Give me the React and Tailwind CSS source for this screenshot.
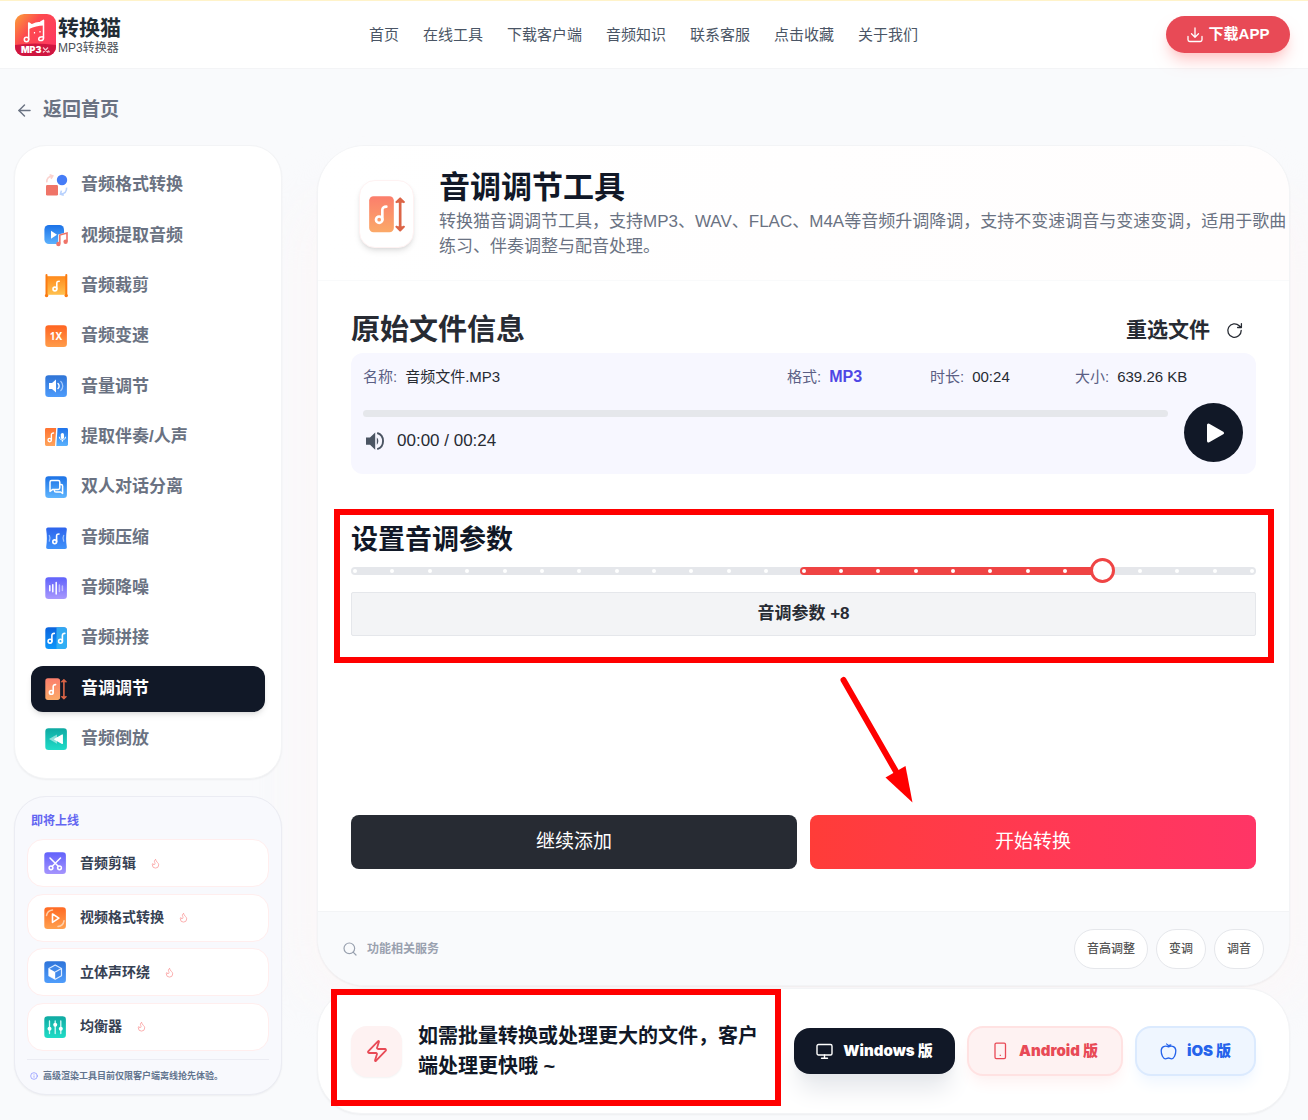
import { useState } from "react";
import { ArrowLeft, Search, Zap, Flame, Info } from "lucide-react";

const navLinks = ["首页", "在线工具", "下载客户端", "音频知识", "联系客服", "点击收藏", "关于我们"];

const Note = ({ x = 0, y = 0, width = 1.6 }) => (
  <g transform={`translate(${x} ${y})`} fill="none" stroke="#fff" strokeWidth={width} strokeLinecap="round">
    <circle cx="10.5" cy="15" r="1.9" />
    <path d="M12.4 15V9.2c0-1.4.9-2 2.4-2" />
  </g>
);

const Icon = ({ children, size = 24 }) => (
  <svg width={size} height={size} viewBox="0 0 24 24" className="shrink-0" aria-hidden="true">{children}</svg>
);

const Tile = ({ id, from, to, children }) => (
  <Icon>
    <defs>
      <linearGradient id={id} x1="0" y1="0" x2="0" y2="1">
        <stop stopColor={from} />
        <stop offset="1" stopColor={to} />
      </linearGradient>
    </defs>
    <rect x="1.3" y="1.3" width="21.6" height="21.6" rx="3.2" fill={`url(#${id})`} />
    {children}
  </Icon>
);

const FormatIcon = () => (
  <Icon>
    <rect x="2" y="12" width="12" height="10.5" rx="1.2" fill="#ef7468" />
    <circle cx="18" cy="7" r="5.2" fill="#457cf7" />
    <path d="M2.8 9.4C2.6 5 4.5 3.4 8 3.2M5.6 1.8L8.8 3 7 5.8" fill="none" stroke="#fbd3cf" strokeWidth="1.6" />
    <path d="M22.6 14.6c.2 4-2 6-5.600 6.400M17.400 17.600l-1 3.600 3.400 1" fill="none" stroke="#b9d2fd" strokeWidth="1.6" />
  </Icon>
);

const ExtractIcon = () => (
  <Icon>
    <defs>
      <linearGradient id="extract" x1="0" y1="0" x2="0" y2="1">
        <stop stopColor="#1b72e8" />
        <stop offset="1" stopColor="#5cb1fd" />
      </linearGradient>
    </defs>
    <rect x="0.4" y="2" width="19.6" height="19" rx="4.5" fill="url(#extract)" />
    <path d="M7 7.7v8l6-4z" fill="#fff" />
    <path d="M14.2 20.6v-9l9.800-2.600v10.600l-6 3z" fill="#fff" />
    <path d="M15.8 20.6v-8.600l7.200-2v8.600" fill="none" stroke="#ef7468" strokeWidth="1.6" />
    <circle cx="14.4" cy="21" r="2.2" fill="#ef7468" />
    <circle cx="21.6" cy="18.8" r="2.2" fill="#ef7468" />
  </Icon>
);

const CutIcon = () => (
  <Icon>
    <defs>
      <linearGradient id="cut" x1="0" y1="0" x2="0" y2="1">
        <stop stopColor="#ff8a1c" />
        <stop offset="1" stopColor="#ffc14f" />
      </linearGradient>
    </defs>
    <rect x="2" y="2.2" width="20.6" height="18.6" fill="url(#cut)" />
    <path d="M2.5 1v21M22.3 1v21" stroke="#fb7c12" strokeWidth="2" strokeLinecap="round" />
    <circle cx="2.6" cy="21.6" r="1.7" fill="#fb7c12" />
    <circle cx="22.2" cy="21.6" r="1.7" fill="#fb7c12" />
    <Note x={0.4} />
  </Icon>
);

const SpeedIcon = () => (
  <Tile id="speed" from="#ff6421" to="#ff9c4a">
    <text x="12" y="15.6" textAnchor="middle" fontSize="10" fontWeight="700" fill="#fff" fontFamily="Noto Sans, sans-serif">1X</text>
  </Tile>
);

const VolumeIcon = () => (
  <Tile id="volume" from="#2f74d6" to="#4d9bfb">
    <path d="M5 9h3l4-3.6v13.2L8 15H5z" fill="#fff" />
    <path d="M14 9.4c1.5 1.4 1.5 3.8 0 5.2" fill="none" stroke="#fff" strokeWidth="1.4" strokeLinecap="round" />
    <path d="M16.8 7.4c2.6 2.6 2.6 6.6 0 9.2" fill="none" stroke="#a8cbfb" strokeWidth="1.3" strokeLinecap="round" />
  </Tile>
);

const VocalIcon = () => (
  <Icon>
    <defs>
      <linearGradient id="vocalA" x1="0" y1="0" x2="0" y2="1">
        <stop stopColor="#ff7230" />
        <stop offset="1" stopColor="#ffa45c" />
      </linearGradient>
      <linearGradient id="vocalB" x1="0" y1="0" x2="0" y2="1">
        <stop stopColor="#1f73ea" />
        <stop offset="1" stopColor="#5ab2fd" />
      </linearGradient>
    </defs>
    <path d="M2.4 3h9.8l-1.2 18H2.4A1.4 1.4 0 0 1 1 19.6V4.4A1.4 1.4 0 0 1 2.4 3z" fill="url(#vocalA)" />
    <path d="M13.6 3h9A1.4 1.4 0 0 1 24 4.4v15.2A1.4 1.4 0 0 1 22.6 21H12.3z" fill="url(#vocalB)" />
    <g transform="translate(-1.5 1.2) scale(.9)"><Note x={-2.5} y={0.4} width={1.5} /></g>
    <rect x="16.8" y="8" width="3.2" height="6" rx="1.6" fill="#fff" />
    <path d="M15.3 11.8c0 4.2 6.2 4.2 6.2 0M18.4 15v1.8" fill="none" stroke="#fff" strokeWidth="1" />
  </Icon>
);

const DialogIcon = () => (
  <Tile id="dialog" from="#1c72e6" to="#5fb5fe">
    <path d="M6 7.2c0-1 .6-1.6 1.6-1.6h6.6c1 0 1.6.6 1.6 1.6v5.6c0 1-.6 1.600-1.600 1.600H8.800L6 16.400z" fill="none" stroke="#fff" strokeWidth="1.5" strokeLinejoin="round" />
    <path d="M15.8 9.400h1.200c1 0 1.600.6 1.600 1.600v7.400l-2-1.400H12c-1 0-1.600-.6-1.600-1.600v-1" fill="none" stroke="#fff" strokeWidth="1.5" strokeLinejoin="round" />
  </Tile>
);

const CompressIcon = () => (
  <Icon>
    <defs>
      <linearGradient id="compress" x1="0" y1="0" x2="0" y2="1">
        <stop stopColor="#2d63ec" />
        <stop offset="1" stopColor="#3f92fa" />
      </linearGradient>
    </defs>
    <path d="M4 1.500h17c1.400 0 2 1 1.800 2.200-.9 5.600-.9 11.200 0 17 .2 1.300-.5 2.300-1.800 2.300H4c-1.300 0-2-1-1.800-2.300.9-5.800.9-11.400 0-17C2 2.500 2.700 1.500 4 1.500z" fill="url(#compress)" />
    <path d="M5.300 9.500c1 1.900 1 3.700 0 5.600M19.700 9.500c-1 1.900-1 3.700 0 5.600" fill="none" stroke="#9cc0fc" strokeWidth="1.3" strokeLinecap="round" />
    <Note x={0.2} y={0.8} />
  </Icon>
);

const DenoiseIcon = () => (
  <Tile id="denoise" from="#6062fb" to="#a898fd">
    <g stroke="#fff" strokeWidth="1.5" strokeLinecap="round">
      <path d="M5.8 9.8v5M8.8 8.8v7M12.2 6.4v11.600" />
      <path d="M15.4 9v6.600M18.400 10v4.600" opacity=".5" />
    </g>
  </Tile>
);

const SpliceIcon = () => (
  <Tile id="splice" from="#0b63dd" to="#0d97fb">
    <path d="M12.5 1.3h7.200a3.200 3.200 0 0 1 3.200 3.200v15.200a3.200 3.200 0 0 1-3.200 3.200h-7.200z" fill="#38b4f5" opacity=".85" />
    <Note x={-4.5} y={0.2} />
    <Note x={6} y={0.2} />
  </Tile>
);

const PitchIcon = ({ size }) => (
  <Icon size={size}>
    <defs>
      <linearGradient id="pitch" x1="0" y1="0" x2="0" y2="1">
        <stop stopColor="#fb7e6c" />
        <stop offset="1" stopColor="#fba968" />
      </linearGradient>
    </defs>
    <rect x="1.3" y="1.3" width="14.8" height="21.6" rx="2.6" fill="url(#pitch)" />
    <Note x={-3.2} y={0.4} />
    <path d="M19.9 3.5v17" stroke="#dc6547" strokeWidth="1.6" />
    <path d="M17.3 5.2l2.6-2.6 2.6 2.6M17.3 19.3l2.6 2.6 2.6-2.6" fill="#dc6547" stroke="#dc6547" strokeWidth="1.2" strokeLinejoin="round" />
  </Icon>
);

const ReverseIcon = () => (
  <Tile id="reverse" from="#0fa9a2" to="#20dcc8">
    <path d="M13 7.4v9.4L5 12.1z" fill="#fff" opacity=".5" strokeLinejoin="round" />
    <path d="M18.3 8v8.4l-7.6-4.2z" fill="#fff" stroke="#fff" strokeWidth="1.2" strokeLinejoin="round" />
  </Tile>
);

const ScissorsIcon = () => (
  <Tile id="scissors" from="#6161fb" to="#a594fd">
    <g fill="none" stroke="#fff" strokeWidth="1.5" strokeLinecap="round">
      <path d="M7 7l8.5 8.5M17.5 7L9 15.5" />
      <circle cx="8" cy="16.8" r="1.9" />
      <circle cx="16.5" cy="16.8" r="1.9" />
    </g>
  </Tile>
);

const VideoIcon = () => (
  <Tile id="video" from="#ff6a24" to="#ffa04e">
    <path d="M9.5 8v8.4l6.4-4.2z" fill="none" stroke="#fff" strokeWidth="1.6" strokeLinejoin="round" />
    <path d="M3.5 9.5c.6-3.200 2.600-5 6-5.400M21 14.800c-.6 3.400-2.600 5.300-6 5.700" fill="none" stroke="#ffd0aa" strokeWidth="1.5" strokeLinecap="round" />
  </Tile>
);

const CubeIcon = () => (
  <Tile id="cube" from="#2e74da" to="#4f9dfb">
    <path d="M12.2 5l6.3 3.5v7.2l-6.3 3.6-6.3-3.6V8.500z" fill="#4189ea" stroke="#dcebff" strokeWidth="1.2" strokeLinejoin="round" />
    <path d="M5.9 8.5l6.3 3.5v7.300l-6.300-3.600z" fill="#fff" />
    <path d="M12.2 12l6.3-3.5" stroke="#dcebff" strokeWidth="1.2" />
  </Tile>
);

const EqualizerIcon = () => (
  <Tile id="equalizer" from="#0fa9a2" to="#1fdcc6">
    <path d="M6.5 6v12.5M12.2 6v12.5M17.8 6v12.5" stroke="#d6fbf6" strokeWidth="1.3" strokeLinecap="round" />
    <circle cx="6.5" cy="13.8" r="2" fill="#fff" />
    <circle cx="12.2" cy="9.8" r="2" fill="#fff" />
    <circle cx="17.8" cy="13.8" r="2" fill="#fff" />
  </Tile>
);

const tools = [
  { name: "音频格式转换", icon: FormatIcon },
  { name: "视频提取音频", icon: ExtractIcon },
  { name: "音频裁剪", icon: CutIcon },
  { name: "音频变速", icon: SpeedIcon },
  { name: "音量调节", icon: VolumeIcon },
  { name: "提取伴奏/人声", icon: VocalIcon },
  { name: "双人对话分离", icon: DialogIcon },
  { name: "音频压缩", icon: CompressIcon },
  { name: "音频降噪", icon: DenoiseIcon },
  { name: "音频拼接", icon: SpliceIcon },
  { name: "音调调节", icon: PitchIcon, active: true },
  { name: "音频倒放", icon: ReverseIcon }
];

const comingSoon = [
  { name: "音频剪辑", icon: ScissorsIcon },
  { name: "视频格式转换", icon: VideoIcon },
  { name: "立体声环绕", icon: CubeIcon },
  { name: "均衡器", icon: EqualizerIcon }
];

function Logo() {
  return (
    <a href="#" className="flex items-center gap-[2px]">
      <svg width="41" height="42" viewBox="0 0 41 42" aria-hidden="true">
        <defs>
          <linearGradient id="logo" x1="0" y1="0" x2="1" y2="0.8">
            <stop stopColor="#fba238" />
            <stop offset="0.4" stopColor="#fd4a4f" />
            <stop offset="1" stopColor="#fe3763" />
          </linearGradient>
          <clipPath id="logoClip"><rect width="41" height="42" rx="9" /></clipPath>
        </defs>
        <g clipPath="url(#logoClip)">
          <rect width="41" height="42" fill="url(#logo)" />
          <path d="M0 31q20-3 41 0v11H0z" fill="#cf1640" />
        </g>
        <g fill="none" stroke="#fff" strokeWidth="1.5" strokeLinejoin="round" strokeLinecap="round">
          <circle cx="11.5" cy="25.5" r="2.2" />
          <path d="M13.7 25.5V9l3 1.8c3-1.7 5.5-2.3 8.5-2.4l3.3-2V24" />
          <path d="M28.5 24c0 1.6-1.2 2.6-2.8 2.6-1.3 0-2-.8-2-1.7 0-1.5 1.7-2.2 4.3-2" />
        </g>
        <path d="M14 9l3 2c3-1.6 5.5-2.2 8.5-2.4l3-2v5c-5 .2-9.5 1.2-14.5 3.4z" fill="#fff" />
        <path d="M19.5 18v1.5M25 17v1.5" stroke="#fff" strokeWidth="1.2" />
        <text x="6" y="39" fontSize="9" fontWeight="900" fill="#fff" fontFamily="Inter, sans-serif">MP3</text>
        <path d="M28 33.5l5 5M33 33.5l-5 5M33 36.5l1.5 2" stroke="#f6bcc8" strokeWidth="1.4" />
      </svg>
      <span className="flex flex-col gap-px pt-[2px]">
        <span className="text-[21px] leading-[23px] font-bold text-[#222c35]">转换猫</span>
        <span className="text-xs leading-4 text-[#4b5158]">MP3转换器</span>
      </span>
    </a>
  );
}

function Header() {
  return (
    <header className="flex h-[69px] items-center justify-between border-t border-b border-t-[#fff3c9] border-b-gray-100 bg-white pr-[18px] pl-[15px]">
      <Logo />
      <nav className="flex gap-6">
        {navLinks.map((label) => (
          <a key={label} href="#" className="text-[15px] leading-6 whitespace-nowrap text-gray-600">{label}</a>
        ))}
      </nav>
      <button type="button" className="flex h-[37px] w-[124px] items-center justify-center gap-[6px] rounded-full bg-[#e84a56] text-[15px] font-bold whitespace-nowrap text-white shadow-lg shadow-red-200">
        <svg width="16" height="16" viewBox="0 0 16 16" fill="none" stroke="currentColor" strokeWidth="1.3" strokeLinecap="round" strokeLinejoin="round" aria-hidden="true">
          <path d="M8 1v9M4.5 6.8L8 10.2l3.5-3.4M1 9.5v3.3c0 1 .7 1.7 1.7 1.7h10.6c1 0 1.7-.7 1.7-1.7V9.5" />
        </svg>
        下载APP
      </button>
    </header>
  );
}

function Sidebar() {
  return (
    <aside className="relative z-10 flex flex-col gap-[17px]">
      <nav className="rounded-[32px] border border-gray-100 bg-white px-4 py-4 shadow-xs">
        <ul className="flex min-h-[600px] flex-col justify-between">
          {tools.map(({ name, icon: ToolIcon, active }) => (
            <li key={name}>
              <a
                href="#"
                className={`flex h-[46px] items-center gap-[13px] rounded-xl pl-[13px] text-[17px] font-bold ${active ? "bg-[#111827] text-white shadow-md" : "text-gray-500"}`}
              >
                <ToolIcon />
                {name}
              </a>
            </li>
          ))}
        </ul>
      </nav>

      <section className="rounded-[32px] border border-[#ebecf3] bg-[#f8f9fd] px-3 pt-4 pb-[10px] shadow-xs">
        <h2 className="pl-1 text-[12px] leading-4 font-bold text-[#6366f1]">即将上线</h2>
        <ul className="mt-[10px] flex min-h-[212px] flex-col justify-between">
          {comingSoon.map(({ name, icon: SoonIcon }) => (
            <li key={name} className="flex h-[48px] items-center rounded-2xl border border-[#ffeeee] bg-white pl-[15px]">
              <SoonIcon />
              <span className="ml-[13px] text-[14px] font-bold text-gray-700">{name}</span>
              <Flame size={11} className="ml-[14px] text-[#fba8a8]" />
            </li>
          ))}
        </ul>
        <p className="mt-2 flex items-center gap-[5px] border-t border-[#ebecf3] pt-2 pl-[3px] text-[9px] leading-4 font-bold whitespace-nowrap text-slate-500">
          <Info size={8} className="text-indigo-400" />
          高级渲染工具目前仅限客户端离线抢先体验。
        </p>
      </section>
    </aside>
  );
}

const Field = ({ label, children }) => (
  <div className="flex gap-2 whitespace-nowrap">
    <dt className="text-[#5b5f85]">{label}:</dt>
    <dd className="text-[#272b33]">{children}</dd>
  </div>
);

function FileInfo() {
  return (
    <section>
      <div className="flex items-center justify-between pr-[13px]">
        <h2 className="text-[29px] leading-9 font-bold text-[#272b33]">原始文件信息</h2>
        <button type="button" className="flex items-center gap-4 text-[21px] leading-7 font-bold text-[#272b33]">
          重选文件
          <svg width="17" height="17" viewBox="0 0 17 17" fill="none" stroke="currentColor" strokeWidth="1.3" strokeLinecap="round" strokeLinejoin="round" aria-hidden="true">
            <path d="M15.2 8.5a6.7 6.7 0 1 1-2-4.7l1.8 1.7M15.4 1.7v3.8h-3.8" />
          </svg>
        </button>
      </div>
      <div className="mt-[5px] rounded-xl bg-[#f7f7ff] py-3 pr-[13px] pl-3">
        <dl className="grid grid-cols-[1fr_143px_145px_168px] text-[15px] leading-6">
          <Field label="名称">音频文件.MP3</Field>
          <Field label="格式"><span className="text-base font-bold text-[#4f46e5]">MP3</span></Field>
          <Field label="时长">00:24</Field>
          <Field label="大小">639.26 KB</Field>
        </dl>
        <div className="mt-[14px] flex gap-4">
          <div className="flex-1 pt-[7px]">
            <div className="h-[7px] rounded-full bg-gray-200" />
            <div className="mt-3 flex items-center gap-3 text-[17px] leading-6 text-[#272b33]">
              <button type="button" aria-label="音量">
                <svg width="22" height="22" viewBox="0 0 22 22" aria-hidden="true">
                  <path d="M3 7.5h4l5.2-5v17.2l-5.2-5H3z" fill="#4b5563" />
                  <path d="M13.8 7.5c2 1.600 2 5.500 0 7.200z" fill="#4b5563" />
                  <path d="M14.2 3c7.800 2.400 7.800 13.800 0 16.200" fill="none" stroke="#4b5563" strokeWidth="1.9" />
                </svg>
              </button>
              <span>00:00 / 00:24</span>
            </div>
          </div>
          <button type="button" aria-label="播放" className="flex size-[59px] items-center justify-center rounded-full bg-[#111827]">
            <svg width="22" height="22" viewBox="0 0 22 22" aria-hidden="true">
              <path d="M5.5 3v16l14-8z" fill="#fff" stroke="#fff" strokeWidth="3" strokeLinejoin="round" />
            </svg>
          </button>
        </div>
      </div>
    </section>
  );
}

function PitchSettings() {
  const [pitch, setPitch] = useState(8);
  const min = Math.min(pitch, 0);

  return (
    <section className="relative mt-[49px]">
      <h2 className="text-[27px] leading-[34px] font-bold text-[#111827]">设置音调参数</h2>
      <div className="relative mt-px flex h-[25px] items-center">
        <div className="relative flex h-2 w-full items-center justify-between overflow-hidden rounded-full bg-gray-200 px-[2px]">
          <div
            className="absolute inset-y-0 rounded-l-sm bg-[#ef4444]"
            style={{ left: `${((min + 12) / 24) * 99 + 0.1}%`, width: `${(Math.abs(pitch) / 24) * 99}%` }}
          />
          {Array.from({ length: 25 }, (_, i) => (
            <span key={i} className="relative size-1 rounded-full bg-white" />
          ))}
        </div>
        <input
          type="range"
          aria-label="音调参数"
          min="-12"
          max="12"
          value={pitch}
          onChange={(e) => setPitch(Number(e.target.value))}
          className="absolute inset-y-0 -left-2 w-[calc(100%+16px)] cursor-pointer appearance-none bg-transparent [&::-webkit-slider-thumb]:size-[25px] [&::-webkit-slider-thumb]:appearance-none [&::-webkit-slider-thumb]:rounded-full [&::-webkit-slider-thumb]:border-3 [&::-webkit-slider-thumb]:border-[#ef4444] [&::-webkit-slider-thumb]:bg-white"
        />
      </div>
      <output className="mt-[9px] flex h-11 items-center justify-center rounded-xs border border-gray-200 bg-gray-100 text-[17px] font-bold text-[#272b33]">
        音调参数 {pitch > 0 ? `+${pitch}` : pitch}
      </output>

      {/* highlight + arrow */}
      <div className="pointer-events-none absolute -top-[14px] -right-[18px] -bottom-[27px] -left-[17px] border-6 border-[#ff0000]" />
      <svg width="80" height="132" viewBox="0 0 80 132" className="pointer-events-none absolute top-[153px] left-[54%]" aria-hidden="true">
        <path d="M3.5 4L58 99" stroke="#ff0000" strokeWidth="6" strokeLinecap="round" />
        <path d="M45.5 101.5L65.500 90l7 36.500z" fill="#ff0000" />
      </svg>
    </section>
  );
}

function ToolCard() {
  return (
    <div className="overflow-hidden rounded-[48px] border border-gray-100 bg-white shadow-xs">
      <div className="flex items-center gap-[25px] border-b border-gray-50 bg-gradient-to-r from-white to-[#fffdfd] pt-[23px] pb-[21px] pl-[41px]">
        <div className="flex h-[68px] w-[55px] shrink-0 items-center justify-center rounded-2xl border border-red-50 bg-white shadow-md">
          <PitchIcon size={40} />
        </div>
        <div>
          <h1 className="text-[31px] leading-[38px] font-bold text-[#111827]">音调调节工具</h1>
          <p className="mt-[2px] text-[17px] leading-[25px] text-gray-500">
            转换猫音调调节工具，支持MP3、WAV、FLAC、M4A等音频升调降调，支持不变速调音与变速变调，适用于歌曲练习、伴奏调整与配音处理。
          </p>
        </div>
      </div>

      <div className="pt-[31px] pr-[33px] pb-[42px] pl-[33px]">
        <FileInfo />
        <PitchSettings />
        <div className="mt-[179px] grid grid-cols-2 gap-[13px]">
          <button type="button" className="h-[54px] rounded-lg bg-[#272b33] text-[19px] text-white">继续添加</button>
          <button type="button" className="h-[54px] rounded-lg bg-gradient-to-r from-[#ff3c38] to-[#ff3566] text-[19px] text-white">开始转换</button>
        </div>
      </div>

      <div className="flex items-center justify-between border-t border-gray-100 bg-[#f9fafc] pt-[17px] pr-[25px] pb-4 pl-6">
        <div className="flex items-center gap-[9px] text-xs font-bold text-gray-400">
          <Search size={16} strokeWidth={1.8} />
          功能相关服务
        </div>
        <div className="flex gap-2">
          {["音高调整", "变调", "调音"].map((tag) => (
            <a key={tag} href="#" className="flex h-10 items-center rounded-[20px] border border-gray-200 bg-white px-3 text-xs font-medium text-[#555555]">{tag}</a>
          ))}
        </div>
      </div>
    </div>
  );
}

function ClientBanner() {
  return (
    <div className="mt-[2px] flex items-center gap-6 rounded-[44px] border border-gray-100 bg-white py-8 pr-[33px] pl-[33px] shadow-xs">
      <div className="relative flex flex-1 items-center gap-4">
        <div className="flex size-[51px] shrink-0 items-center justify-center rounded-2xl bg-red-50 shadow-xs">
          <Zap size={24} strokeWidth={1.8} className="text-[#e84a56]" />
        </div>
        <p className="text-[20px] leading-[30px] font-bold text-[#111827]">如需批量转换或处理更大的文件，客户端处理更快哦 ~</p>
        <div className="pointer-events-none absolute -top-8 -right-[11px] -bottom-[25px] -left-5 border-6 border-[#ff0000]" />
      </div>
      <div className="flex items-center gap-3 font-['Inter','Noto_Sans_CJK_SC',sans-serif] text-[15px] font-black whitespace-nowrap">
        <button type="button" className="flex h-[46px] w-[161px] items-center justify-center gap-[10px] rounded-2xl bg-[#111827] text-white shadow-xl shadow-gray-200">
          <svg width="17" height="17" viewBox="0 0 17 17" fill="none" stroke="currentColor" strokeWidth="1.4" strokeLinecap="round" strokeLinejoin="round" aria-hidden="true">
            <rect x="1" y="1.5" width="15" height="10.5" rx="1.5" />
            <path d="M8.5 12v3M5.5 15.3h6" />
          </svg>
          Windows 版
        </button>
        <button type="button" className="flex h-[50px] w-[156px] items-center justify-center gap-[11px] rounded-2xl border-2 border-red-100 bg-red-50 text-[#e84a56] shadow-lg shadow-red-50">
          <svg width="16" height="18" viewBox="0 0 16 18" fill="none" stroke="currentColor" strokeWidth="1.3" aria-hidden="true">
            <rect x="3" y="1.2" width="10.5" height="15.4" rx="1.3" />
            <path d="M7.7 13.3h1.2" />
          </svg>
          Android 版
        </button>
        <button type="button" className="flex h-[50px] w-[121px] items-center justify-center gap-[10px] rounded-2xl border-2 border-blue-100 bg-blue-50 text-[#2563eb] shadow-lg shadow-blue-50">
          <svg width="17" height="17" viewBox="0 0 17 17" fill="none" stroke="currentColor" strokeWidth="1.3" strokeLinecap="round" strokeLinejoin="round" aria-hidden="true">
            <path d="M8.5 3.8C5 2.2 1.2 3.6 1.2 7.8c0 3.8 1.8 8 4.4 8 1.1 0 1.8-.8 2.9-.8s1.8.8 2.9.8c2.6 0 4.4-4.2 4.4-8 0-4.2-3.8-5.6-7.3-4zM8.5 3.8C8.5 2.2 8 1.400 6.600 1M8.500 3.400c.3-1 1-1.600 2.300-1.600" />
          </svg>
          iOS 版
        </button>
      </div>
    </div>
  );
}

export default function App() {
  return (
    <div className="min-h-screen overflow-hidden bg-[#f9fafc] pb-1 font-['Liberation_Sans','Noto_Sans_CJK_SC',sans-serif]" lang="zh-CN">
      <Header />
      <div className="pr-[18px] pl-[14px]">
        <a href="#" className="mt-[27px] mb-[21px] inline-flex h-7 items-center gap-[9px] pl-px text-[19px] font-bold text-gray-500">
          <ArrowLeft size={19} strokeWidth={1.8} />
          返回首页
        </a>
        <div className="grid grid-cols-[268px_1fr] items-start gap-[35px]">
          <Sidebar />
          <main className="relative">
            <div className="absolute inset-x-[-20px] top-12 bottom-[110px] rounded-[60px] bg-[#fbf7f8] blur-xl" />
            <div className="relative">
              <ToolCard />
              <ClientBanner />
            </div>
          </main>
        </div>
      </div>
    </div>
  );
}
